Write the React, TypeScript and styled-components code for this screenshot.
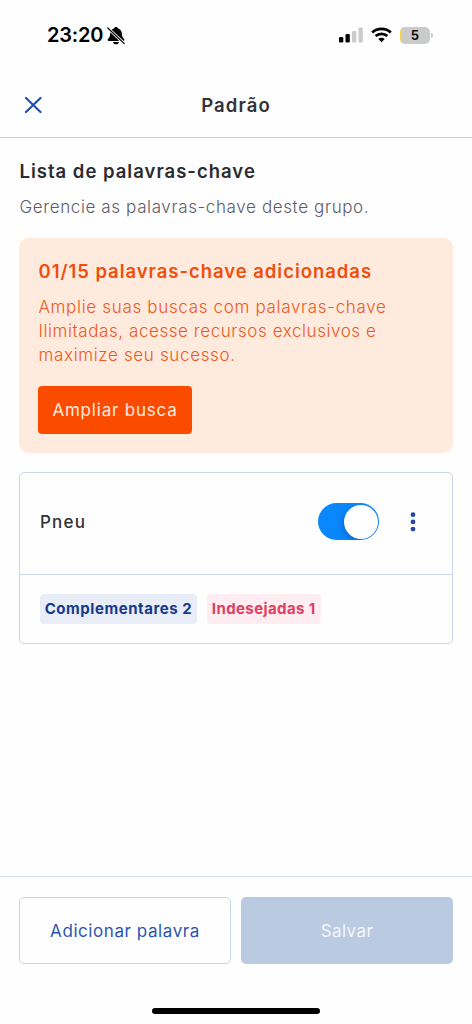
import React from "react";
import styled, { createGlobalStyle } from "styled-components";

const Global = createGlobalStyle`
  * { box-sizing: border-box; }
  body { margin: 0; background: #fefefe; font-family: Inter, "Liberation Sans", sans-serif; }
  button { font-family: inherit; cursor: pointer; padding: 0; }
  h1, h2, h3, p { margin: 0; }
  svg { display: block; flex: none; }
`;

const Screen = styled.div`
  display: flex;
  flex-direction: column;
  width: 472px;
  height: 1024px;
  background: #fefefe;
`;

const StatusBar = styled.div`
  display: flex;
  align-items: center;
  height: 72px;
  padding: 0 39px 2px 47px;
`;

const Clock = styled.span`
  width: 60px;
  font-size: 20px;
  font-weight: 600;
  letter-spacing: -0.2px;
  white-space: nowrap;
  color: #000;
`;

const StatusIcons = styled.div`
  display: flex;
  align-items: center;
  gap: 8px;
  margin-left: auto;
`;

const BatteryWrap = styled.div`
  display: flex;
  align-items: center;
  gap: 1px;
`;

const Battery = styled.div`
  width: 30px;
  height: 17px;
  border-radius: 5px;
  background: linear-gradient(90deg, #f3d34a 2px, #cbcbcb 2px);
  font-size: 13px;
  line-height: 17px;
  font-weight: 700;
  text-align: center;
  color: #111;
`;

const BatteryTip = styled.span`
  width: 2px;
  height: 5px;
  border-radius: 0 2px 2px 0;
  background: #cbcbcb;
`;

const Header = styled.header`
  display: grid;
  grid-template-columns: 28px 1fr 28px;
  align-items: center;
  height: 66px;
  padding: 0 19px;
  border-bottom: 1px solid #c5d2e2;
`;

const IconButton = styled.button`
  display: flex;
  align-items: center;
  justify-content: center;
  width: 28px;
  height: 28px;
  border: 0;
  background: none;
`;

interface Spaced {
  $ls?: number;
}

const Title = styled.h1<Spaced>`
  font-size: 18.5px;
  font-weight: 600;
  line-height: 24px;
  padding-top: 1px;
  text-align: center;
  color: #323239;
  letter-spacing: ${(p) => p.$ls ?? 0}px;
`;

const Main = styled.main`
  flex: 1;
  padding: 21px 19px 0;
`;

const SectionTitle = styled.h2<Spaced>`
  padding-left: 0.5px;
  font-size: 18.5px;
  font-weight: 600;
  line-height: 24px;
  white-space: nowrap;
  color: #2b2b31;
  letter-spacing: ${(p) => p.$ls ?? 0}px;
`;

const Subtitle = styled.p<Spaced>`
  margin-top: 12px;
  padding-left: 0.5px;
  font-size: 17px;
  font-weight: 300;
  line-height: 24px;
  white-space: nowrap;
  color: #5d5d66;
  letter-spacing: ${(p) => p.$ls ?? 0}px;
`;

const Promo = styled.section`
  height: 215px;
  margin-top: 19px;
  padding: 21px 19px 19px;
  border-radius: 9px;
  background: #ffebde;
`;

const PromoTitle = styled.h3<Spaced>`
  padding-left: 0.5px;
  font-size: 18.5px;
  font-weight: 600;
  line-height: 24px;
  white-space: nowrap;
  color: #f04e0c;
  letter-spacing: ${(p) => p.$ls ?? 0}px;
`;

const PromoText = styled.p`
  margin-top: 12px;
  padding-left: 0.5px;
  font-size: 17px;
  font-weight: 300;
  line-height: 24px;
  color: #ea5a22;
`;

const Line = styled.span<Spaced>`
  display: block;
  white-space: nowrap;
  letter-spacing: ${(p) => p.$ls ?? 0}px;
`;

const PromoButton = styled.button<Spaced>`
  width: 154px;
  height: 48px;
  margin-top: 19px;
  border: 0;
  border-radius: 4px;
  background: #fa4b00;
  color: #ffeadf;
  font-size: 17px;
  font-weight: 400;
  letter-spacing: ${(p) => p.$ls ?? 0}px;
`;

const Card = styled.section`
  height: 172px;
  margin-top: 19px;
  border: 1.5px solid #ccd6e6;
  border-radius: 5px;
`;

const CardTop = styled.div`
  display: flex;
  align-items: center;
  height: 102px;
  padding: 0 25px 4px 20px;
  border-bottom: 1px solid #ccd9e8;
`;

const Keyword = styled.span<Spaced>`
  flex: 1;
  font-size: 17px;
  font-weight: 500;
  color: #303036;
  letter-spacing: ${(p) => p.$ls ?? 0}px;
`;

const Toggle = styled.button`
  display: flex;
  align-items: center;
  justify-content: flex-end;
  width: 61px;
  height: 37px;
  margin-right: 20px;
  padding: 0 1px;
  border: 0;
  border-radius: 19px;
  background: #0a87fd;
  overflow: hidden;
`;

const Knob = styled.span`
  width: 34px;
  height: 34px;
  border-radius: 50%;
  background: #fff;
  box-shadow: -2px 2px 5px rgba(0, 40, 110, 0.25);
`;

const Tags = styled.div`
  display: flex;
  gap: 10px;
  padding: 19px 20px;
`;

const Tag = styled.span<Spaced & { $tone: "blue" | "red"; $w: number }>`
  width: ${(p) => p.$w}px;
  height: 30px;
  border-radius: 4px;
  text-align: center;
  font-size: 15px;
  font-weight: 700;
  line-height: 30px;
  white-space: nowrap;
  letter-spacing: ${(p) => p.$ls ?? 0}px;
  color: ${(p) => (p.$tone === "blue" ? "#17398a" : "#dc3f5f")};
  background: ${(p) => (p.$tone === "blue" ? "#e8edf8" : "#ffedf1")};
`;

const Footer = styled.footer`
  display: grid;
  grid-template-columns: 1fr 1fr;
  gap: 10px;
  height: 132px;
  padding: 20px 19px 0;
  border-top: 1px solid #d5deea;
`;

const Action = styled.button<Spaced & { $filled?: boolean }>`
  height: 67px;
  border: ${(p) => (p.$filled ? "0" : "1.5px solid #c8d5e8")};
  border-radius: 5px;
  background: ${(p) => (p.$filled ? "#bacae0" : "#fefefe")};
  color: ${(p) => (p.$filled ? "#f3f7fc" : "#2c55b0")};
  font-size: 17px;
  font-weight: 400;
  letter-spacing: ${(p) => p.$ls ?? 0}px;
`;

const HomeArea = styled.div`
  display: flex;
  justify-content: center;
  height: 16px;
`;

const HomeBar = styled.span`
  width: 168px;
  height: 6px;
  border-radius: 3px;
  background: #000;
`;

const BellOff = () => (
  <svg width="18" height="19" viewBox="0 0 18 19">
    <path
      d="M9 1c-1.100 0-1.900.6-2.100 1.500C4.400 3.300 3.200 5.200 3.100 8c-.1 2.900-.8 3.700-2.100 5-.8.8-.3 1.900.7 1.900h14.600c1 0 1.500-1.100.7-1.900-1.300-1.300-2-2.100-2.100-5-.1-2.800-1.300-4.700-3.800-5.500C10.900 1.600 10.100 1 9 1z"
      fill="#000"
    />
    <path d="M6.100 15.900h5.800c-.2 1.400-1.400 2.300-2.900 2.300s-2.700-.9-2.900-2.300z" fill="#000" />
    <path d="M1 2.200 17 17.400" stroke="#fefefe" strokeWidth="2.900" />
    <path d="M.8 2 17.200 17.600" stroke="#000" strokeWidth="1.200" strokeLinecap="round" />
  </svg>
);

const Signal = () => (
  <svg width="24" height="16" viewBox="0 0 24 16">
    <rect x="0" y="10" width="4.300" height="5.500" rx="1.300" fill="#000" />
    <rect x="6.500" y="7" width="4.300" height="8.500" rx="1.300" fill="#000" />
    <rect x="13" y="4" width="4.300" height="11.500" rx="1.300" fill="#cbcbcb" />
    <rect x="19.500" y="0.500" width="4.300" height="15" rx="1.300" fill="#cbcbcb" />
  </svg>
);

const Wifi = () => (
  <svg width="21" height="16" viewBox="0 0 21 16" fill="none" stroke="#000" strokeWidth="2.700">
    <path d="M1.200 5.600C6.400.7 14.600.7 19.800 5.600" />
    <path d="M4.600 9.100c3.400-3.100 8.400-3.100 11.800 0" />
    <path d="M7.300 11.900c1.900-1.600 4.500-1.600 6.400 0L10.500 15.200z" fill="#000" stroke="none" />
  </svg>
);

const Close = () => (
  <svg width="18" height="18" viewBox="0 0 18 18">
    <path d="M2 2 16.500 16M16.500 2 2 16" stroke="#1f4fae" strokeWidth="2.200" strokeLinecap="round" />
  </svg>
);

const Dots = () => (
  <svg width="6" height="20" viewBox="0 0 6 20" fill="#2148a6">
    <circle cx="3" cy="2.700" r="2.400" />
    <circle cx="3" cy="9.900" r="2.400" />
    <circle cx="3" cy="17.100" r="2.400" />
  </svg>
);

export default function App() {
  return (
    <Screen>
      <Global />
      <StatusBar>
        <Clock>23:20</Clock>
        <BellOff />
        <StatusIcons>
          <Signal />
          <Wifi />
          <BatteryWrap>
            <Battery>5</Battery>
            <BatteryTip />
          </BatteryWrap>
        </StatusIcons>
      </StatusBar>
      <Header>
        <IconButton aria-label="Fechar">
          <Close />
        </IconButton>
        <Title $ls={1.1}>Padrão</Title>
      </Header>
      <Main>
        <SectionTitle $ls={1}>Lista de palavras-chave</SectionTitle>
        <Subtitle $ls={0.62}>Gerencie as palavras-chave deste grupo.</Subtitle>
        <Promo>
          <PromoTitle $ls={0.96}>01/15 palavras-chave adicionadas</PromoTitle>
          <PromoText>
            <Line $ls={0.67}>Amplie suas buscas com palavras-chave</Line>
            <Line $ls={0.57}>Ilimitadas, acesse recursos exclusivos e</Line>
            <Line $ls={0.65}>maximize seu sucesso.</Line>
          </PromoText>
          <PromoButton $ls={0.8}>Ampliar busca</PromoButton>
        </Promo>
        <Card>
          <CardTop>
            <Keyword $ls={1.2}>Pneu</Keyword>
            <Toggle role="switch" aria-checked="true" aria-label="Pneu">
              <Knob />
            </Toggle>
            <IconButton aria-label="Opções">
              <Dots />
            </IconButton>
          </CardTop>
          <Tags>
            <Tag $tone="blue" $w={157} $ls={0.55}>Complementares 2</Tag>
            <Tag $tone="red" $w={113.5} $ls={0.4}>Indesejadas 1</Tag>
          </Tags>
        </Card>
      </Main>
      <Footer>
        <Action $ls={0.57}>Adicionar palavra</Action>
        <Action $filled $ls={0.4}>Salvar</Action>
      </Footer>
      <HomeArea>
        <HomeBar />
      </HomeArea>
    </Screen>
  );
}
